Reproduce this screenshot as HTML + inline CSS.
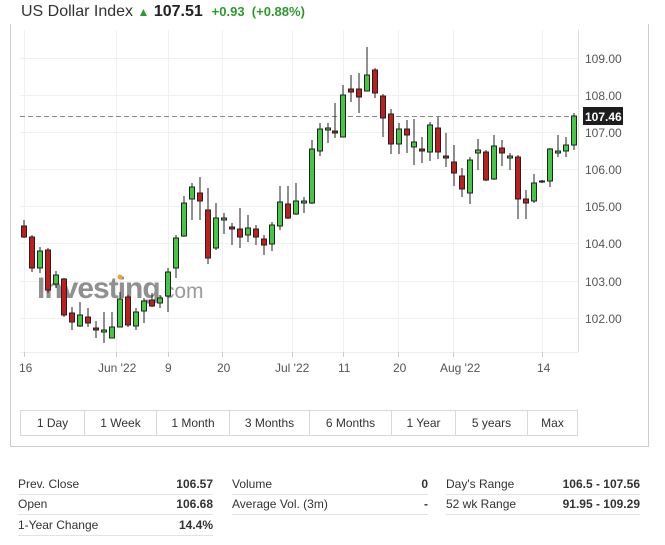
<!DOCTYPE html>
<html><head><meta charset="utf-8"><style>
*{margin:0;padding:0;box-sizing:border-box}
body{width:665px;height:545px;background:#fff;font-family:"Liberation Sans",sans-serif;color:#333;position:relative;overflow:hidden}
.title{position:absolute;left:21px;top:3px;font-size:16px;white-space:nowrap}
.title b{font-size:16px;color:#222}
.chg{color:#2d9a2d;font-weight:bold;font-size:13px}
.panel{position:absolute;left:10px;top:24px;width:639px;height:423px;border:1px solid #ccc;border-top:none}
.btns{position:absolute;left:20px;top:410px;width:558px;height:26px;border:1px solid #d8d8d8;display:flex}
.btns div{border-right:1px solid #d8d8d8;font-size:12px;color:#333;text-align:center;line-height:24px}
.btns div:last-child{border-right:none}
.stats{position:absolute;top:474px;font-size:12px}
.row{height:20.5px;border-bottom:1px solid #e3e3e3;display:flex;justify-content:space-between;align-items:center}
.row span:last-child{font-weight:bold}
</style></head><body>
<div class="title">US Dollar Index <span style="color:#2d9a2d;font-size:12px">&#9650;</span> <b>107.51</b> &nbsp;<span class="chg">+0.93 &nbsp;(+0.88%)</span></div>
<div class="panel"></div>
<svg style="position:absolute;left:0;top:0" width="665" height="400">
<g stroke="#f0f0f0" stroke-width="1">
<line x1="20" x2="578" y1="58.5" y2="58.5"/><line x1="20" x2="578" y1="95.5" y2="95.5"/><line x1="20" x2="578" y1="132.5" y2="132.5"/><line x1="20" x2="578" y1="169.5" y2="169.5"/><line x1="20" x2="578" y1="206.5" y2="206.5"/><line x1="20" x2="578" y1="243.5" y2="243.5"/><line x1="20" x2="578" y1="281.5" y2="281.5"/><line x1="20" x2="578" y1="318.5" y2="318.5"/>
<line x1="24.5" x2="24.5" y1="30" y2="352"/><line x1="116.5" x2="116.5" y1="30" y2="352"/><line x1="168.5" x2="168.5" y1="30" y2="352"/><line x1="222.5" x2="222.5" y1="30" y2="352"/><line x1="292.5" x2="292.5" y1="30" y2="352"/><line x1="343.5" x2="343.5" y1="30" y2="352"/><line x1="398.5" x2="398.5" y1="30" y2="352"/><line x1="453.5" x2="453.5" y1="30" y2="352"/><line x1="542.5" x2="542.5" y1="30" y2="352"/>
</g>
<line x1="578.5" x2="578.5" y1="30" y2="352" stroke="#ddd"/>
<line x1="20" x2="578" y1="352.5" y2="352.5" stroke="#eee"/>
<g stroke="#ccc"><line x1="24.5" x2="24.5" y1="352" y2="357"/><line x1="116.5" x2="116.5" y1="352" y2="357"/><line x1="168.5" x2="168.5" y1="352" y2="357"/><line x1="222.5" x2="222.5" y1="352" y2="357"/><line x1="292.5" x2="292.5" y1="352" y2="357"/><line x1="343.5" x2="343.5" y1="352" y2="357"/><line x1="398.5" x2="398.5" y1="352" y2="357"/><line x1="453.5" x2="453.5" y1="352" y2="357"/><line x1="542.5" x2="542.5" y1="352" y2="357"/></g>
<text x="37" y="298" font-family="Liberation Sans" font-weight="bold" font-size="30" fill="#7d7d7d" fill-opacity="0.85" letter-spacing="-1">Investing</text>
<text x="158" y="298" font-family="Liberation Sans" font-size="21" fill="#8a8a8a" fill-opacity="0.85">.com</text>
<circle cx="120" cy="277" r="2.5" fill="#f0a040"/>
<line x1="20" x2="578" y1="116.5" y2="116.5" stroke="#888" stroke-dasharray="5,3"/>
<g stroke="#222" stroke-width="1">
<line x1="24" x2="24" y1="220" y2="238"/><rect x="21.5" y="226" width="5" height="11" fill="#c01e1e"/>
<line x1="32" x2="32" y1="235" y2="272"/><rect x="29.5" y="237" width="5" height="31" fill="#c01e1e"/>
<line x1="40" x2="40" y1="247" y2="273"/><rect x="37.5" y="251" width="5" height="17" fill="#45c745"/>
<line x1="48" x2="48" y1="248" y2="293"/><rect x="45.5" y="250" width="5" height="40" fill="#c01e1e"/>
<line x1="56" x2="56" y1="271" y2="288"/><rect x="53.5" y="275" width="5" height="9" fill="#45c745"/>
<line x1="64" x2="64" y1="278" y2="317"/><rect x="61.5" y="279" width="5" height="36" fill="#c01e1e"/>
<line x1="72" x2="72" y1="307" y2="330"/><rect x="69.5" y="313" width="5" height="9" fill="#c01e1e"/>
<line x1="80" x2="80" y1="302" y2="327"/><rect x="77.5" y="315" width="5" height="11" fill="#45c745"/>
<line x1="88" x2="88" y1="308" y2="327"/><rect x="85.5" y="317" width="5" height="6" fill="#c01e1e"/>
<line x1="96" x2="96" y1="321" y2="338"/><rect x="93.5" y="328" width="5" height="2" fill="#c01e1e"/>
<line x1="104" x2="104" y1="312" y2="343"/><rect x="101.5" y="330" width="5" height="2" fill="#45c745"/>
<line x1="112" x2="112" y1="312" y2="338"/><rect x="109.5" y="327" width="5" height="11" fill="#45c745"/>
<line x1="120" x2="120" y1="292" y2="327"/><rect x="117.5" y="299" width="5" height="28" fill="#45c745"/>
<line x1="128" x2="128" y1="295" y2="327"/><rect x="125.5" y="297" width="5" height="28" fill="#c01e1e"/>
<line x1="136" x2="136" y1="308" y2="330"/><rect x="133.5" y="312" width="5" height="14" fill="#45c745"/>
<line x1="144" x2="144" y1="298" y2="323"/><rect x="141.5" y="301" width="5" height="10" fill="#45c745"/>
<line x1="152" x2="152" y1="293" y2="307"/><rect x="149.5" y="300" width="5" height="6" fill="#c01e1e"/>
<line x1="160" x2="160" y1="295" y2="308"/><rect x="157.5" y="298" width="5" height="5" fill="#45c745"/>
<line x1="168" x2="168" y1="268" y2="312"/><rect x="165.5" y="272" width="5" height="24" fill="#45c745"/>
<line x1="176" x2="176" y1="235" y2="278"/><rect x="173.5" y="238" width="5" height="30" fill="#45c745"/>
<line x1="184" x2="184" y1="196" y2="237"/><rect x="181.5" y="203" width="5" height="33" fill="#45c745"/>
<line x1="192" x2="192" y1="183" y2="220"/><rect x="189.5" y="187" width="5" height="12" fill="#45c745"/>
<line x1="200" x2="200" y1="177" y2="220"/><rect x="197.5" y="193" width="5" height="8" fill="#c01e1e"/>
<line x1="208" x2="208" y1="188" y2="264"/><rect x="205.5" y="210" width="5" height="48" fill="#c01e1e"/>
<line x1="216" x2="216" y1="203" y2="250"/><rect x="213.5" y="218" width="5" height="30" fill="#45c745"/>
<line x1="224" x2="224" y1="213" y2="234"/><rect x="221.5" y="218" width="5" height="2" fill="#45c745"/>
<line x1="232" x2="232" y1="223" y2="245"/><rect x="229.5" y="227" width="5" height="2" fill="#c01e1e"/>
<line x1="240" x2="240" y1="208" y2="248"/><rect x="237.5" y="229" width="5" height="8" fill="#c01e1e"/>
<line x1="248" x2="248" y1="215" y2="242"/><rect x="245.5" y="228" width="5" height="7" fill="#45c745"/>
<line x1="256" x2="256" y1="225" y2="245"/><rect x="253.5" y="229" width="5" height="8" fill="#c01e1e"/>
<line x1="264" x2="264" y1="235" y2="255"/><rect x="261.5" y="239" width="5" height="6" fill="#c01e1e"/>
<line x1="272" x2="272" y1="222" y2="251"/><rect x="269.5" y="225" width="5" height="19" fill="#45c745"/>
<line x1="280" x2="280" y1="186" y2="230"/><rect x="277.5" y="202" width="5" height="24" fill="#45c745"/>
<line x1="288" x2="288" y1="186" y2="219"/><rect x="285.5" y="204" width="5" height="14" fill="#c01e1e"/>
<line x1="296" x2="296" y1="183" y2="215"/><rect x="293.5" y="201" width="5" height="13" fill="#45c745"/>
<line x1="304" x2="304" y1="197" y2="213"/><rect x="301.5" y="201" width="5" height="2" fill="#45c745"/>
<line x1="312" x2="312" y1="140" y2="204"/><rect x="309.5" y="149" width="5" height="54" fill="#45c745"/>
<line x1="320" x2="320" y1="123" y2="156"/><rect x="317.5" y="129" width="5" height="22" fill="#45c745"/>
<line x1="328" x2="328" y1="123" y2="143"/><rect x="325.5" y="128" width="5" height="2" fill="#45c745"/>
<line x1="335" x2="335" y1="103" y2="138"/><rect x="332.5" y="131" width="5" height="2" fill="#c01e1e"/>
<line x1="343" x2="343" y1="85" y2="137"/><rect x="340.5" y="95" width="5" height="42" fill="#45c745"/>
<line x1="351" x2="351" y1="75" y2="102"/><rect x="348.5" y="89" width="5" height="3" fill="#c01e1e"/>
<line x1="359" x2="359" y1="73" y2="113"/><rect x="356.5" y="89" width="5" height="8" fill="#c01e1e"/>
<line x1="367" x2="367" y1="47" y2="91"/><rect x="364.5" y="75" width="5" height="16" fill="#45c745"/>
<line x1="375" x2="375" y1="68" y2="98"/><rect x="372.5" y="70" width="5" height="23" fill="#c01e1e"/>
<line x1="383" x2="383" y1="94" y2="137"/><rect x="380.5" y="96" width="5" height="22" fill="#c01e1e"/>
<line x1="391" x2="391" y1="109" y2="154"/><rect x="388.5" y="114" width="5" height="30" fill="#c01e1e"/>
<line x1="399" x2="399" y1="123" y2="154"/><rect x="396.5" y="129" width="5" height="15" fill="#45c745"/>
<line x1="407" x2="407" y1="120" y2="153"/><rect x="404.5" y="129" width="5" height="6" fill="#c01e1e"/>
<line x1="414" x2="414" y1="119" y2="165"/><rect x="411.5" y="142" width="5" height="5" fill="#45c745"/>
<line x1="422" x2="422" y1="137" y2="163"/><rect x="419.5" y="149" width="5" height="2" fill="#c01e1e"/>
<line x1="430" x2="430" y1="122" y2="161"/><rect x="427.5" y="125" width="5" height="27" fill="#45c745"/>
<line x1="438" x2="438" y1="117" y2="159"/><rect x="435.5" y="128" width="5" height="24" fill="#c01e1e"/>
<line x1="446" x2="446" y1="133" y2="167"/><rect x="443.5" y="156" width="5" height="2" fill="#c01e1e"/>
<line x1="454" x2="454" y1="145" y2="186"/><rect x="451.5" y="162" width="5" height="11" fill="#c01e1e"/>
<line x1="462" x2="462" y1="168" y2="197"/><rect x="459.5" y="176" width="5" height="13" fill="#c01e1e"/>
<line x1="470" x2="470" y1="157" y2="204"/><rect x="467.5" y="160" width="5" height="33" fill="#45c745"/>
<line x1="478" x2="478" y1="139" y2="170"/><rect x="475.5" y="150" width="5" height="3" fill="#45c745"/>
<line x1="486" x2="486" y1="150" y2="181"/><rect x="483.5" y="152" width="5" height="28" fill="#c01e1e"/>
<line x1="494" x2="494" y1="135" y2="180"/><rect x="491.5" y="146" width="5" height="33" fill="#45c745"/>
<line x1="502" x2="502" y1="140" y2="166"/><rect x="499.5" y="148" width="5" height="5" fill="#c01e1e"/>
<line x1="510" x2="510" y1="153" y2="170"/><rect x="507.5" y="156" width="5" height="2" fill="#45c745"/>
<line x1="518" x2="518" y1="155" y2="219"/><rect x="515.5" y="157" width="5" height="42" fill="#c01e1e"/>
<line x1="526" x2="526" y1="190" y2="219"/><rect x="523.5" y="199" width="5" height="4" fill="#c01e1e"/>
<line x1="534" x2="534" y1="174" y2="203"/><rect x="531.5" y="183" width="5" height="18" fill="#45c745"/>
<line x1="542" x2="542" y1="180" y2="183"/><rect x="539.5" y="181" width="5" height="1" fill="#45c745"/>
<line x1="550" x2="550" y1="148" y2="187"/><rect x="547.5" y="149" width="5" height="32" fill="#45c745"/>
<line x1="558" x2="558" y1="135" y2="157"/><rect x="555.5" y="151" width="5" height="2" fill="#45c745"/>
<line x1="566" x2="566" y1="137" y2="157"/><rect x="563.5" y="145" width="5" height="6" fill="#45c745"/>
<line x1="574" x2="574" y1="113" y2="150"/><rect x="571.5" y="116" width="5" height="29" fill="#45c745"/>
</g>
<g font-family="Liberation Sans" font-size="12" fill="#555">
<text x="585" y="63">109.00</text><text x="585" y="100">108.00</text><text x="585" y="137">107.00</text><text x="585" y="174">106.00</text><text x="585" y="211">105.00</text><text x="585" y="248">104.00</text><text x="585" y="286">103.00</text><text x="585" y="323">102.00</text>
<text x="19" y="372">16</text><text x="98" y="372">Jun '22</text><text x="165" y="372">9</text><text x="217" y="372">20</text><text x="275" y="372">Jul '22</text><text x="338" y="372">11</text><text x="393" y="372">20</text><text x="440" y="372">Aug '22</text><text x="537" y="372">14</text>
</g>
<rect x="583" y="107" width="40" height="18" fill="#1e1e1e"/>
<text x="585" y="121" font-family="Liberation Sans" font-size="12" font-weight="bold" fill="#fff">107.46</text>
</svg>
<div class="btns">
<div style="width:64px">1 Day</div><div style="width:72px">1 Week</div><div style="width:73px">1 Month</div><div style="width:80px">3 Months</div><div style="width:82px">6 Months</div><div style="width:64px">1 Year</div><div style="width:72px">5 years</div><div style="flex:1">Max</div>
</div>
<div class="stats" style="left:18px;width:195px">
<div class="row"><span>Prev. Close</span><span>106.57</span></div>
<div class="row"><span>Open</span><span>106.68</span></div>
<div class="row"><span>1-Year Change</span><span>14.4%</span></div>
</div>
<div class="stats" style="left:232px;width:196px">
<div class="row"><span>Volume</span><span>0</span></div>
<div class="row"><span>Average Vol. (3m)</span><span>-</span></div>
</div>
<div class="stats" style="left:446px;width:194px">
<div class="row"><span>Day's Range</span><span>106.5 - 107.56</span></div>
<div class="row"><span>52 wk Range</span><span>91.95 - 109.29</span></div>
</div>
</body></html>
